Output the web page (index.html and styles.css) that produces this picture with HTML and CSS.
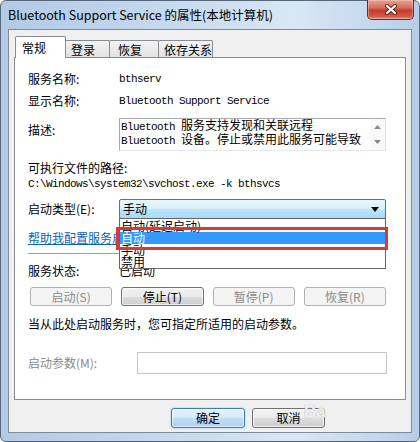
FILE: index.html
```html
<!DOCTYPE html>
<html lang="zh-CN">
<head>
  <meta charset="UTF-8" />
  <title>Bluetooth Support Service 的属性</title>
  <link rel="stylesheet" href="styles.css">
</head>
<body>

  <div class="window">
    <div class="titlebar">
      <span class="title">Bluetooth Support Service 的属性(本地计算机)</span>
      <button class="close-btn" title="关闭">
        <svg width="14" height="11" viewBox="0 0 14 11">
          <path d="M3 2 L11 9 M11 2 L3 9" stroke="#5a2219" stroke-width="4" stroke-linecap="round" />
          <path d="M3 2 L11 9 M11 2 L3 9" stroke="#fff" stroke-width="2.2" stroke-linecap="round" />
        </svg>
      </button>
    </div>

    <div class="client">
      <div class="tabs">
        <div class="tab active">常规</div>
        <div class="tab tab-logon">登录</div>
        <div class="tab tab-recovery">恢复</div>
        <div class="tab tab-deps">依存关系</div>
      </div>

      <div class="panel">
        <div class="row row-name">
          <span class="label">服务名称:</span>
          <span class="mono">bthserv</span>
        </div>
        <div class="row row-display">
          <span class="label">显示名称:</span>
          <span class="mono">Bluetooth Support Service</span>
        </div>
        <div class="row row-desc">
          <span class="label">描述:</span>
          <div class="textbox">
            <div class="textbox-text">
              <div><span class="mono">Bluetooth </span>服务支持发现和关联远程</div>
              <div><span class="mono">Bluetooth </span>设备。停止或禁用此服务可能导致</div>
            </div>
            <div class="scrollbar">
              <svg width="7" height="4" viewBox="0 0 7 4"><path d="M0 4 L3.5 0 L7 4 Z" fill="#8a8a8a" /></svg>
              <svg width="7" height="4" viewBox="0 0 7 4"><path d="M0 0 L3.5 4 L7 0 Z" fill="#8a8a8a" /></svg>
            </div>
          </div>
        </div>
        <div class="path-label">可执行文件的路径:</div>
        <div class="mono path">C:\Windows\system32\svchost.exe -k bthsvcs</div>

        <div class="row row-startup">
          <span class="label">启动类型(E):</span>
          <div class="combo-wrap">
            <div class="combo">
              <span>手动</span>
              <svg width="8" height="5" viewBox="0 0 8 5"><path d="M0 0 L8 0 L4 5 Z" fill="#000" /></svg>
            </div>
            <ul class="dropdown">
              <li>自动(延迟启动)</li>
              <li class="selected">自动</li>
              <li>手动</li>
              <li>禁用</li>
            </ul>
            <div class="mark"></div>
          </div>
        </div>

        <a class="help-link" href="#">帮助我配置服务启动选项。</a>
        <div class="separator"></div>

        <div class="row row-status">
          <span class="label">服务状态:</span>
          <span>已启动</span>
        </div>

        <div class="actions">
          <button class="btn" disabled>启动(S)</button>
          <button class="btn">停止(T)</button>
          <button class="btn" disabled>暂停(P)</button>
          <button class="btn" disabled>恢复(R)</button>
        </div>

        <div class="hint">当从此处启动服务时，您可指定所适用的启动参数。</div>

        <div class="row row-params">
          <span class="label label-params">启动参数(M):</span>
          <div class="param-input"></div>
        </div>
      </div>

      <div class="footer">
        <button class="btn btn-default">确定</button>
        <button class="btn">取消</button>
        <span class="watermark">Ba</span>
      </div>
    </div>
  </div>

</body>
</html>
```

FILE: styles.css
```css
* {
  box-sizing: border-box;
}
html, body {
  margin: 0;
  padding: 0;
}
body {
  width: 420px;
  height: 442px;
  overflow: hidden;
  background: #fff;
  color: #000;
  font-family: "Noto Sans CJK SC", "Liberation Sans", sans-serif;
  font-size: 12px;
}

/* window frame */
.window {
  width: 420px;
  height: 442px;
  display: flex;
  flex-direction: column;
  padding: 0 7px 8px 7px;
  border: 1px solid #56677c;
  border-radius: 6px;
  background: linear-gradient(90deg, #b2cae5 0%, #c3d7ee 35%, #d9e6f5 70%, #c9dbef 85%, #b7cde8 100%);
}
.titlebar {
  height: 28px;
  display: flex;
  justify-content: space-between;
  align-items: flex-start;
}
.title {
  padding-top: 6px;
  line-height: 16px;
  font-size: 12.5px;
  color: #000;
}
.close-btn {
  width: 47px;
  height: 20px;
  margin: -1px -2px 0 0;
  padding: 0;
  display: flex;
  align-items: center;
  justify-content: center;
  border: 1px solid #6e2a22;
  border-top: none;
  border-radius: 0 0 5px 5px;
  background: linear-gradient(#e6a294 0%, #d66f5f 40%, #c43c2c 55%, #cf5a45 85%, #e08b73 100%);
  box-shadow: inset 0 0 0 1px rgba(255, 210, 200, 0.45);
}

/* client area */
.client {
  flex: 1;
  display: flex;
  flex-direction: column;
  padding: 0 5px;
  background: #f0f0f0;
  border: 1px solid #7f8b98;
}
.tabs {
  height: 27px;
  display: flex;
  align-items: flex-end;
  position: relative;
  z-index: 1;
}
.tab {
  height: 17px;
  margin-left: -1px;
  padding: 1px 0 0 6px;
  line-height: 15px;
  border: 1px solid #898c95;
  border-bottom: none;
  border-radius: 2px 2px 0 0;
  background: linear-gradient(#f3f3f3, #e2e2e2);
}
.tab.active {
  width: 51px;
  height: 22px;
  margin: 0 0 -1px 1px;
  padding: 3px 0 0 6px;
  line-height: 16px;
  background: #fff;
}
.tab-logon {
  width: 45px;
  padding-left: 5px;
}
.tab-recovery {
  width: 50px;
  padding-left: 8px;
}
.tab-deps {
  width: 55px;
  padding-left: 5px;
}

.panel {
  height: 343px;
  padding: 0 18px 0 13px;
  background: #fff;
  border: 1px solid #898c95;
}
.row {
  display: flex;
  align-items: flex-start;
  line-height: 16px;
}
.label {
  width: 91px;
  flex-shrink: 0;
}
.mono {
  font-family: "Liberation Mono", monospace;
  font-size: 11px;
  letter-spacing: -0.6px;
}
.row-name {
  margin-top: 13px;
}
.row-display {
  margin-top: 6px;
}
.row-desc {
  margin-top: 9px;
}
.row-desc .label {
  margin-top: 4px;
}
.textbox {
  width: 267px;
  height: 33px;
  display: flex;
  border: 1px solid #a7abb0;
  border-right-color: #dbdfe6;
  border-bottom-color: #e3e9ef;
}
.textbox-text {
  flex: 1;
  padding-left: 1px;
  line-height: 12px;
  white-space: nowrap;
  overflow: hidden;
}
.scrollbar {
  width: 15px;
  display: flex;
  flex-direction: column;
  justify-content: space-around;
  align-items: center;
  background: #f9f9f9;
}
.path-label {
  margin-top: 9px;
  line-height: 16px;
}
.path {
  line-height: 16px;
}

.row-startup {
  margin-top: 7px;
  line-height: 20px;
}
.combo-wrap {
  position: relative;
  z-index: 2;
}
.combo {
  width: 267px;
  height: 20px;
  display: flex;
  justify-content: space-between;
  align-items: center;
  padding: 0 6px 0 3px;
  border: 1px solid #3c7fb1;
  border-radius: 2px;
  background: linear-gradient(#eaf6fd 0%, #d9f0fc 50%, #bee6fd 50%, #a7d9f5 100%);
}
.dropdown {
  position: absolute;
  top: 19px;
  left: 0;
  width: 267px;
  margin: 0;
  padding: 1px 0 0;
  list-style: none;
  background: #fff;
  border: 1px solid #646464;
}
.dropdown li {
  height: 12px;
  line-height: 12px;
  padding-left: 1px;
}
.dropdown li.selected {
  background: #3399ff;
  color: #fff;
}
.mark {
  position: absolute;
  top: 28px;
  left: -3px;
  width: 272px;
  height: 23px;
  border: 3px solid #d8393c;
}

.help-link {
  display: block;
  margin-top: 11px;
  line-height: 16px;
  color: #0b63b5;
  text-decoration: underline;
  white-space: nowrap;
}
.separator {
  height: 1px;
  margin-top: 7px;
  width: 357px;
  background: #a0a0a0;
}
.row-status {
  margin-top: 9px;
}

.btn {
  height: 19px;
  padding: 0;
  font-family: inherit;
  font-size: 12px;
  line-height: 17px;
  color: #000;
  border: 1px solid #707070;
  border-radius: 3px;
  background: linear-gradient(#f2f2f2 0%, #ebebeb 50%, #dddddd 50%, #cfcfcf 100%);
  box-shadow: inset 0 0 0 1px rgba(255, 255, 255, 0.7);
}
.btn:disabled {
  color: #8a8a8a;
  border-color: #adb2b5;
  background: #f4f4f4;
  box-shadow: none;
}
.actions {
  width: 356px;
  margin: 8px 0 0 2px;
  display: grid;
  grid-template-columns: repeat(4, 1fr);
  gap: 9px;
}

.hint {
  margin-top: 10px;
  line-height: 16px;
}
.row-params {
  margin-top: 20px;
  line-height: 22px;
}
.label-params {
  width: 109px;
  color: #8a8a8a;
}
.param-input {
  width: 250px;
  height: 22px;
  border: 1px solid #c2c6cb;
  background: #fff;
}

/* dialog buttons */
.footer {
  position: relative;
  flex: 1;
  display: flex;
  justify-content: flex-end;
  align-items: flex-start;
  gap: 7px;
  padding: 8px 81px 0 0;
}
.footer .btn {
  width: 73px;
  height: 20px;
  line-height: 18px;
}
.footer .btn-default {
  width: 74px;
  border-color: #3c7fb1;
  background: linear-gradient(#e5f1fb 0%, #d5e9f8 50%, #c1ddf3 50%, #b0d2ee 100%);
  box-shadow: 0 0 2px #7fc3ee, inset 0 0 0 1px rgba(255, 255, 255, 0.6);
}
.watermark {
  position: absolute;
  left: 290px;
  top: 2px;
  font-family: "Liberation Sans", sans-serif;
  font-size: 17px;
  font-weight: bold;
  color: rgba(255, 255, 255, 0.85);
  text-shadow: 0 0 1px #9a9a9a;
}
```
